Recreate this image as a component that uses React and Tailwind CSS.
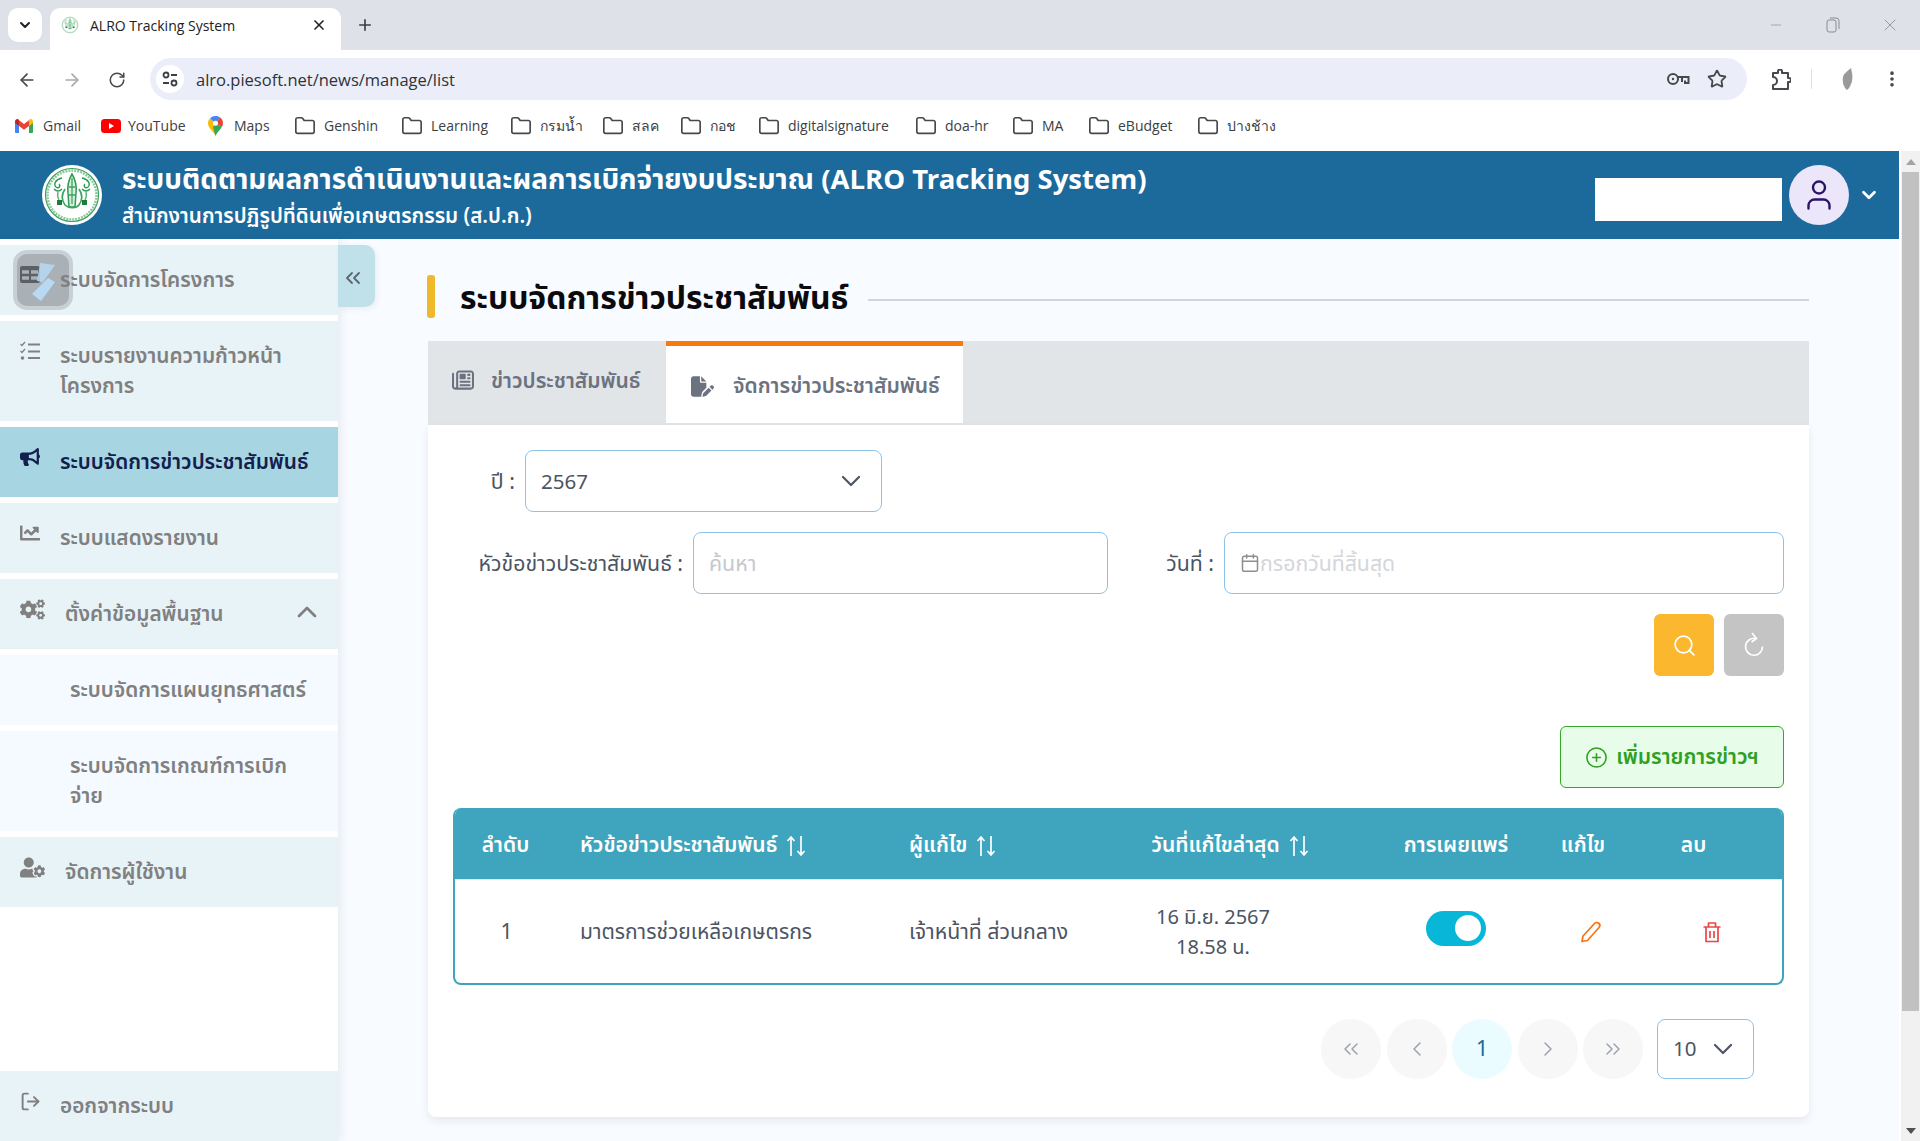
import React from "react";
import { ChevronDown, ChevronUp, X, Plus, ArrowLeft, ArrowRight, RotateCw, Minus, Folder, User, ChevronsLeft, ChevronsRight, ChevronLeft, ChevronRight, Calendar, Search, CirclePlus, LogOut, EllipsisVertical, Star } from "lucide-react";
import { FaBullhorn, FaChartLine, FaCogs, FaUserCog } from "react-icons/fa";
import { FaFilePen, FaRegNewspaper } from "react-icons/fa6";

function Emblem({ size }) {
  return (
    <svg width={size} height={size} viewBox="0 0 60 60">
      <circle cx="30" cy="30" r="30" fill="#fff" />
      <circle cx="30" cy="30" r="26.5" fill="none" stroke="#3a9f5a" strokeWidth="1.200" />
      <circle cx="30" cy="30" r="24.500" fill="none" stroke="#8cc9a0" strokeWidth="2.600" strokeDasharray="2 1" />
      <path d="M30 9c3 5 5 11 4 19l-1 14h-6l-1-14c-1-8 1-14 4-19z" fill="#d9efe0" stroke="#2f9a52" strokeWidth="1.500" />
      <path d="M30 13v26M27 22h6M27 30h6" stroke="#3aa55e" strokeWidth="1.300" />
      <path d="M20 13c-6 1-9 6-6 9 3 2 5-1 3-3M40 13c6 1 9 6 6 9-3 2-5-1-3-3M12 24c3 3 6 2 8 0M48 24c-3 3-6 2-8 0" fill="none" stroke="#2f9a52" strokeWidth="1.400" />
      <path d="M23 24c-4 6-3 12 0 16 3 3 11 4 14 0 3-4 4-10 0-16" fill="none" stroke="#3aa55e" strokeWidth="1.700" />
      <path d="M16 27c-1 3 0 6 1 8M44 27c1 3 0 6-1 8" fill="none" stroke="#57b277" strokeWidth="1.400" />
      <rect x="15" y="35" width="5" height="5" fill="#1f7a3c" />
      <rect x="40" y="35" width="5" height="5" fill="#1f7a3c" />
    </svg>
  );
}

function GmailIcon() {
  return (
    <svg width="18" height="14" viewBox="0 0 18 14">
      <path d="M0 2.500V13a1 1 0 0 0 1 1h3V6.500z" fill="#4285f4" />
      <path d="M18 2.500V13a1 1 0 0 1-1 1h-3V6.500z" fill="#34a853" />
      <path d="M4 7V1.200L9 5l5-3.800V7L9 10.800z" fill="#ea4335" />
      <path d="M0 2.500C0 .6 2.200-.5 3.500.5L4 1v6L0 4z" fill="#c5221f" />
      <path d="M18 2.500C18 .6 15.800-.5 14.500.5L14 1v6l4-3z" fill="#fbbc04" />
    </svg>
  );
}
function YouTubeIcon() {
  return (
    <svg width="20" height="14" viewBox="0 0 20 14">
      <rect width="20" height="14" rx="3.500" fill="#ff0000" />
      <path d="M8 4l5 3-5 3z" fill="#fff" />
    </svg>
  );
}
function MapsIcon() {
  return (
    <svg width="15" height="20" viewBox="0 0 15 20">
      <path d="M7.500 20C6 16 0 12 0 7.200c0-2 .8-3.700 2.100-5L7.500 7.500z" fill="#fbbc04" />
      <path d="M2.100 2.200A7.400 7.400 0 0 1 7.500 0c1.600 0 3 .5 4.200 1.300L7.500 7.500z" fill="#4285f4" />
      <path d="M11.700 1.300A7.400 7.400 0 0 1 15 7.200c0 1.300-.4 2.500-1 3.600L7.500 7.500z" fill="#ea4335" />
      <path d="M14 10.800C12.300 14 8.700 16.500 7.500 20L5 11l2.500-3.500z" fill="#34a853" />
      <circle cx="7.500" cy="7.300" r="2.500" fill="#fff" />
    </svg>
  );
}

function TuneIcon() {
  return (
    <svg width="18" height="18" viewBox="0 0 18 18" fill="none" stroke="#3c4043" strokeWidth="1.800">
      <circle cx="5" cy="5" r="2.500" />
      <path d="M10 5h6M2 13h6" />
      <circle cx="13" cy="13" r="2.500" />
    </svg>
  );
}
function KeyIcon() {
  return (
    <svg width="24" height="16" viewBox="0 0 24 16" fill="none" stroke="#46484c" strokeWidth="2">
      <circle cx="7" cy="8" r="5" />
      <circle cx="7" cy="8" r="1.200" fill="#46484c" stroke="none" />
      <path d="M12 6h10.500v6h-3.500V9.500M16 6v5" />
    </svg>
  );
}
function PuzzleIcon() {
  return (
    <svg width="20" height="21" viewBox="0 0 20 21" fill="none" stroke="#46484c" strokeWidth="2" strokeLinejoin="round">
      <path d="M2 4h5V2.500a2 2 0 0 1 4 0V4h6v5h1a2 2 0 0 1 0 4h-1v7H2v-4a3 3 0 0 0 0-8z" />
    </svg>
  );
}

const bookmarks = [
  { label: "Gmail", icon: <GmailIcon />, w: "w-[86px]", g: "gap-[10px]" },
  { label: "YouTube", icon: <YouTubeIcon />, w: "w-[107px]", g: "gap-[7px]" },
  { label: "Maps", icon: <MapsIcon />, w: "w-[86px]", g: "gap-[11px]" },
  { label: "Genshin", w: "w-[107px]", g: "gap-[8px]" },
  { label: "Learning", w: "w-[109px]", g: "gap-[8px]" },
  { label: "กรมน้ำ", w: "w-[92px]", g: "gap-[8px]" },
  { label: "สลค", w: "w-[78px]", g: "gap-[8px]" },
  { label: "กอช", w: "w-[78px]", g: "gap-[8px]" },
  { label: "digitalsignature", w: "w-[157px]", g: "gap-[8px]" },
  { label: "doa-hr", w: "w-[97px]", g: "gap-[8px]" },
  { label: "MA", w: "w-[76px]", g: "gap-[8px]" },
  { label: "eBudget", w: "w-[109px]", g: "gap-[8px]" },
  { label: "ปางช้าง", w: "w-[90px]", g: "gap-[8px]" },
];

function BrowserChrome() {
  return (
    <div className="bg-white font-['Open_Sans','Noto_Sans',sans-serif] text-[#3c4043]">
      <div className="h-[50px] bg-[#dee1e7] flex items-end pl-[8px]">
        <div className="h-[34px] w-[34px] mb-[8px] bg-white rounded-[10px] flex items-center justify-center">
          <ChevronDown size={16} strokeWidth={3} className="text-[#202124]" />
        </div>
        <div className="ml-[8px] w-[291px] h-[42px] pb-[8px] bg-white rounded-t-[10px] flex items-center pl-[11px] pr-[14px]">
          <div className="w-[18px] h-[18px] shrink-0"><Emblem size={18} /></div>
          <span className="ml-[11px] text-[14px] text-[#202124] flex-1">ALRO Tracking System</span>
          <X size={16} strokeWidth={2.500} className="text-[#202124]" />
        </div>
        <Plus size={18} strokeWidth={2.200} className="ml-[15px] mb-[16px] text-[#3c4043]" />
        <div className="flex-1" />
        <div className="flex items-center h-[50px] pr-[20px] text-[#8a8c90]">
          <Minus size={16} strokeWidth={1} />
          <svg width="14" height="16" viewBox="0 0 14 16" className="ml-[42px]"><rect x="1" y="3" width="9" height="12" rx="2" fill="none" stroke="currentColor" /><path d="M4 1h6a3 3 0 0 1 3 3v8" fill="none" stroke="currentColor" /></svg>
          <X size={20} strokeWidth={1} className="ml-[40px]" />
        </div>
      </div>
      <div className="h-[50px] flex items-end pl-[17px] relative">
        <div className="h-[42px] pt-[2px] flex items-center w-[133px] gap-[25px]">
          <ArrowLeft size={20} strokeWidth={2} className="text-[#46484c]" />
          <ArrowRight size={20} strokeWidth={2} className="text-[#a6a8ac]" />
          <RotateCw size={18} strokeWidth={2} className="text-[#46484c] ml-[1px]" />
        </div>
        <div className="h-[42px] w-[1597px] bg-[#ebeef8] rounded-full flex items-center pl-[6px] pr-[20px]">
          <div className="w-[28px] h-[28px] rounded-full bg-white flex items-center justify-center">
            <TuneIcon />
          </div>
          <span className="ml-[12px] pt-[2px] text-[16.500px] text-[#30323a] flex-1">alro.piesoft.net/news/manage/list</span>
          <KeyIcon />
          <Star size={20} strokeWidth={2.200} className="ml-[17px] text-[#46484c]" />
        </div>
        <div className="h-[42px] flex items-center flex-1">
          <div className="ml-[24px]"><PuzzleIcon /></div>
          <div className="ml-[20px] w-[1px] h-[20px] bg-[#d3e3fd]" />
          <svg width="14" height="24" viewBox="0 0 14 24" className="ml-[28px]"><path d="M11 1c1 5 2 8 1 13-1 4-3 8-5 9-3-2-5-8-4-13 1-4 5-6 8-9z" fill="#9a9a9a" /></svg>
          <EllipsisVertical size={20} strokeWidth={2.400} className="ml-[28px] text-[#46484c]" />
        </div>
      </div>
      <div className="h-[51px] flex items-center pl-[15px]">
        {bookmarks.map((b) => (
          <div key={b.label} className={`flex items-center shrink-0 ${b.w} ${b.g}`}>
            {b.icon || <Folder size={22} strokeWidth={1.800} className="text-[#46484c]" />}
            <span className="text-[14px] text-[#3c4043]">{b.label}</span>
          </div>
        ))}
      </div>
    </div>
  );
}

function NavItem({ icon, children, active, sub, wide, right }) {
  return (
    <div className={`relative flex items-start pt-[21px] pb-[19px] text-[20.800px] leading-[30px] font-semibold ${active ? "bg-[#a8d5e2] text-[#13204d]" : sub ? "bg-[#f4faff] text-[#808080]" : "bg-[#e8f3f8] text-[#808080]"} ${sub ? "pl-[70px] pr-[20px]" : "pl-[20px] pr-[20px]"}`}>
      {icon && <div className={`h-[20px] -mt-[1px] shrink-0 flex items-center ${wide ? "w-[45px]" : "w-[40px]"}`}>{icon}</div>}
      <span className="relative z-20 whitespace-nowrap">{children}</span>
      {right}
    </div>
  );
}

function TasksIcon() {
  return (
    <svg width="20" height="20" viewBox="0 0 20 20" fill="none" stroke="currentColor" strokeWidth="2">
      <path d="M8 3.500h12M8 10.500h12M8 17h12" />
      <path d="M.5 3l1.500 1.500L5 1M.5 10l1.500 1.500L5 8" strokeWidth="1.300" />
      <circle cx="2.500" cy="17" r="1.800" fill="currentColor" stroke="none" />
    </svg>
  );
}

function Sidebar() {
  return (
    <aside className="relative w-[338px] shrink-0 bg-white flex flex-col pt-[6px] shadow-[4px_0_8px_rgba(0,0,0,0.06)] z-10">
      <div className="flex flex-col gap-[6px]">
        <NavItem icon={<span className="w-[20px]" />}>ระบบจัดการโครงการ</NavItem>
        <NavItem icon={<TasksIcon />}>ระบบรายงานความก้าวหน้า<br />โครงการ</NavItem>
        <NavItem active icon={<FaBullhorn size={20} />}>ระบบจัดการข่าวประชาสัมพันธ์</NavItem>
        <NavItem icon={<FaChartLine size={20} />}>ระบบแสดงรายงาน</NavItem>
        <NavItem wide icon={<FaCogs size={25} />} right={<ChevronUp size={32} strokeWidth={2} className="absolute right-[15px] top-[17px]" />}>ตั้งค่าข้อมูลพื้นฐาน</NavItem>
        <NavItem sub>ระบบจัดการแผนยุทธศาสตร์</NavItem>
        <NavItem sub>ระบบจัดการเกณฑ์การเบิก<br />จ่าย</NavItem>
        <NavItem wide icon={<FaUserCog size={25} />}>จัดการผู้ใช้งาน</NavItem>
      </div>
      <div className="mt-auto">
        <NavItem icon={<LogOut size={21} strokeWidth={2.200} />}>ออกจากระบบ</NavItem>
      </div>
      <div className="absolute z-10 left-[13px] top-[11px] w-[60px] h-[60px] rounded-[14px] bg-[#a9b1b6] border-[4px] border-[#c9d0d5] overflow-hidden">
        <svg width="52" height="52" viewBox="0 0 52 52">
          <rect x="3" y="12" width="20" height="17" rx="2" fill="#5b5f66" />
          <path d="M5 18h7M14 18h7M5 24h7M14 24h7" stroke="#a9b1b6" strokeWidth="3.500" />
          <path d="M23 9l15 2-12 17-6-1z" fill="#b9d9f2" opacity="0.85" />
          <path d="M31 24l7 4-14 19-9-7z" fill="#b9d9f2" />
        </svg>
      </div>
      <div className="absolute left-[338px] top-[6px] w-[37px] h-[62px] pr-[8px] pt-[4px] rounded-r-[10px] bg-[#c0e1e9] flex items-center justify-center shadow-[2px_2px_6px_rgba(0,0,0,0.06)]">
        <ChevronsLeft size={24} strokeWidth={1.800} className="text-[#5c6670]" />
      </div>
    </aside>
  );
}

const fieldCls = "h-[62px] border border-[#8ec3e8] rounded-[8px] bg-white flex items-center";

function SortArrows() {
  return (
    <svg width="20" height="22" viewBox="0 0 20 22" fill="none" stroke="currentColor" strokeWidth="1.700" className="ml-[9px]">
      <path d="M5 21V2M1.500 6L5 2l3.500 4M15 1v19M11.500 16l3.500 4 3.500-4" />
    </svg>
  );
}

function PencilIcon() {
  return (
    <svg width="24" height="24" viewBox="0 0 24 24" fill="none" stroke="#f97316" strokeWidth="1.700" strokeLinejoin="round">
      <path d="M3 21.500l1-5.500L15.500 3.500a3 3 0 0 1 4.500 4L8.500 20.500z" />
    </svg>
  );
}
function TrashIcon() {
  return (
    <svg width="24" height="24" viewBox="0 0 24 24" fill="none" stroke="#ef4444" strokeWidth="1.700" strokeLinejoin="round">
      <path d="M3.500 7h17M6 7v14.500h12V7M8.500 7V3h7v4M10 11v7M14 11v7" />
    </svg>
  );
}
function RefreshIcon() {
  return (
    <svg width="26" height="28" viewBox="0 0 26 28" fill="none" stroke="#fff" strokeWidth="1.700">
      <path d="M15 7.500a8.500 8.500 0 1 0 6.500 8" />
      <path d="M11 2l4.500 5.500L10.500 11" />
    </svg>
  );
}

function PageBtn({ children, active }) {
  return (
    <div className={`w-[60px] h-[60px] rounded-full flex items-center justify-center ${active ? "bg-[#eafcff] text-[#1c6a9b] pt-[2px]" : "bg-[#f7f7f7] text-[#9ca3af]"}`}>{children}</div>
  );
}

function Main() {
  return (
    <main className="flex-1 min-w-0 bg-[#f8fbff] pl-[89px] pr-[90px] pt-[36px]">
      <div className="flex items-center h-[43px]">
        <div className="w-[8px] h-[43px] rounded-[3px] bg-[#f0b92b]" />
        <h1 className="ml-[25px] pt-[5px] text-[31.900px] font-bold text-[#0b0b0f] leading-[43px] whitespace-nowrap">ระบบจัดการข่าวประชาสัมพันธ์</h1>
        <div className="ml-[20px] mt-[6px] flex-1 h-[2px] bg-[#d2d6dc]" />
      </div>
      <div className="mt-[23px] h-[84px] bg-[#e2e5e8] flex ml-[1px]">
        <div className="w-[238px] flex items-start pt-[28px] pl-[24px] text-[21px] leading-[26px] font-semibold text-[#6b7280]">
          <FaRegNewspaper size={22} className="mt-[0px]" />
          <span className="ml-[17px]">ข่าวประชาสัมพันธ์</span>
        </div>
        <div className="w-[297px] bg-white border-t-[5px] border-[#f97a0c] h-[82px] flex items-start pt-[28px] pl-[25px] text-[21px] leading-[26px] font-semibold text-[#6b7280]">
          <FaFilePen size={23} className="mt-[1px]" />
          <span className="ml-[19px]">จัดการข่าวประชาสัมพันธ์</span>
        </div>
      </div>
      <section className="ml-[1px] bg-white rounded-b-[8px] shadow-[0_4px_10px_rgba(0,0,0,0.08)] px-[25px] pt-[25px] pb-[38px] text-[21.300px] text-[#4b5563]">
        <div className="flex items-center">
          <label className="w-[62px] pt-[4px] text-right mr-[10px]">ปี :</label>
          <div className={`${fieldCls} w-[357px] pl-[15px] pr-[14px] justify-between`}>
            <span className="pt-[4px] text-[20.500px]">2567</span>
            <ChevronDown size={32} strokeWidth={1.600} className="text-[#4b5563]" />
          </div>
        </div>
        <div className="flex items-center mt-[20px]">
          <label className="w-[230px] pt-[4px] text-right mr-[10px]">หัวข้อข่าวประชาสัมพันธ์ :</label>
          <div className={`${fieldCls} w-[415px] pl-[15px] pt-[4px] text-[#c4c8ce]`}>ค้นหา</div>
          <label className="w-[106px] pt-[4px] text-right mr-[10px]">วันที่ :</label>
          <div className={`${fieldCls} flex-1 pl-[15px] text-[#d4d6da]`}>
            <Calendar size={20} strokeWidth={1.800} className="text-[#8b8f94]" />
            <span className="pt-[4px]">กรอกวันที่สิ้นสุด</span>
          </div>
        </div>
        <div className="flex justify-end gap-[10px] mt-[20px]">
          <div className="w-[60px] h-[62px] rounded-[6px] bg-[#fbb72e] flex items-center justify-center text-white"><Search size={25} strokeWidth={1.700} /></div>
          <div className="w-[60px] h-[62px] rounded-[6px] bg-[#c4c4c4] flex items-center justify-center"><RefreshIcon /></div>
        </div>
        <div className="flex justify-end mt-[50px]">
          <div className="w-[224px] h-[62px] rounded-[6px] bg-[#e7fde9] border border-[#34a726] text-[#2fa01f] text-[21px] font-semibold flex items-center justify-center gap-[8px]">
            <CirclePlus size={23} strokeWidth={1.600} />
            <span className="pt-[1px]">เพิ่มรายการข่าวฯ</span>
          </div>
        </div>
        <div className="mt-[20px] border-[2px] border-t-0 border-[#3fa4bd] rounded-[8px] overflow-hidden">
          <div className="h-[72px] pt-[4px] -mx-[2px] bg-[#3fa4bd] border-b border-[#e5e7eb] text-white text-[21px] font-semibold grid grid-cols-[105px_351px_221px_200px_36px_180px_74px_1fr] items-center">
            <div className="text-center">ลำดับ</div>
            <div className="pl-[22px] flex items-center">หัวข้อข่าวประชาสัมพันธ์<SortArrows /></div>
            <div className="flex items-center">ผู้แก้ไข<SortArrows /></div>
            <div className="flex items-center justify-center">วันที่แก้ไขล่าสุด<SortArrows /></div>
            <div />
            <div className="text-center">การเผยแพร่</div>
            <div className="text-center">แก้ไข</div>
            <div className="pr-[17px] text-center">ลบ</div>
          </div>
          <div className="h-[103px] -mx-[2px] px-[2px] flex items-center text-[#4b5563]">
            <div className="w-[103px] pt-[3px] text-center">1</div>
            <div className="w-[351px] pt-[3px] pl-[22px] text-[21px]">มาตรการช่วยเหลือเกษตรกร</div>
            <div className="w-[194px] pt-[3px] whitespace-nowrap">เจ้าหน้าที่ ส่วนกลาง</div>
            <div className="w-[220px] pt-[3px] text-center text-[20px] leading-[30px]">16 มิ.ย. 2567<br />18.58 น.</div>
            <div className="ml-[103px] w-[60px] h-[35px] rounded-full bg-[#08b6d8] flex items-center justify-end pr-[5px] mb-[7px]">
              <div className="w-[26px] h-[26px] rounded-full bg-white" />
            </div>
            <div className="ml-[93px]"><PencilIcon /></div>
            <div className="ml-[97px]"><TrashIcon /></div>
          </div>
        </div>
        <div className="flex justify-end items-center mt-[34px] pr-[30px]">
          <div className="flex items-center gap-[5.500px]">
            <PageBtn><ChevronsLeft size={24} strokeWidth={1.500} /></PageBtn>
            <PageBtn><ChevronLeft size={24} strokeWidth={1.500} /></PageBtn>
            <PageBtn active>1</PageBtn>
            <PageBtn><ChevronRight size={24} strokeWidth={1.500} /></PageBtn>
            <PageBtn><ChevronsRight size={24} strokeWidth={1.500} /></PageBtn>
          </div>
          <div className={`${fieldCls} ml-[14px] w-[97px] !h-[60px] pl-[15px] pr-[14px] justify-between`}>
            <span className="pt-[3px] text-[20.500px]">10</span>
            <ChevronDown size={32} strokeWidth={1.600} />
          </div>
        </div>
      </section>
    </main>
  );
}

export default function App() {
  return (
    <div className="w-[1920px] h-[1141px] overflow-hidden flex flex-col bg-white">
      <BrowserChrome />
      <div className="flex flex-1 min-h-0">
        <div className="flex-1 min-w-0 flex flex-col font-['Noto_Sans_Thai','Noto_Sans',sans-serif]">
          <header className="h-[88px] shrink-0 bg-[#1c6a9b] flex items-center pl-[42px] text-white">
            <Emblem size={60} />
            <div className="ml-[20px] flex-1">
              <div className="text-[27.950px] font-bold leading-[42px] pt-[1px] whitespace-nowrap">ระบบติดตามผลการดำเนินงานและผลการเบิกจ่ายงบประมาณ <span className="text-[27.500px]">(ALRO Tracking System)</span></div>
              <div className="text-[20.600px] font-semibold leading-[30px] whitespace-nowrap">สำนักงานการปฏิรูปที่ดินเพื่อเกษตรกรรม (ส.ป.ก.)</div>
            </div>
            <div className="w-[187px] h-[43px] mt-[9px] bg-white" />
            <div className="ml-[7px] w-[60px] h-[60px] rounded-full bg-[#ebe6f9] flex items-center justify-center">
              <User size={36} strokeWidth={1.600} className="text-[#2d1566]" />
            </div>
            <ChevronDown size={22} strokeWidth={3} className="ml-[9px] mr-[19px]" />
          </header>
          <div className="flex flex-1 min-h-0">
            <Sidebar />
            <Main />
          </div>
        </div>
        <div className="w-[21px] shrink-0 bg-[#f1f1f1] flex flex-col items-center border-l-[2px] border-white">
          <div className="h-[21px] flex items-center justify-center">
            <div className="w-0 h-0 border-x-[5px] border-x-transparent border-b-[6px] border-b-[#a3a3a3]" />
          </div>
          <div className="w-[17px] h-[839px] bg-[#c1c1c1]" />
          <div className="mt-auto h-[21px] flex items-center justify-center">
            <div className="w-0 h-0 border-x-[5px] border-x-transparent border-t-[6px] border-t-[#505050]" />
          </div>
        </div>
      </div>
    </div>
  );
}
